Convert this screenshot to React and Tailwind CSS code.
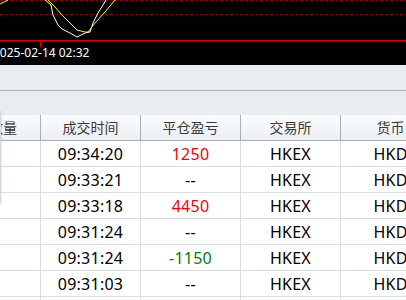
import React from "react";

const rows = [
  { t: "09:34:20", p: "1250", c: "text-[#ff0000]" },
  { t: "09:33:21", p: "--", c: "text-black" },
  { t: "09:33:18", p: "4450", c: "text-[#ff0000]" },
  { t: "09:31:24", p: "--", c: "text-black" },
  { t: "09:31:24", p: "-1150", c: "text-[#008000]" },
  { t: "09:31:03", p: "--", c: "text-black" },
  { t: "", p: "", c: "text-black" },
];

const headers = ["成交时间", "平仓盈亏", "交易所", "货币"];

function Chart() {
  return (
    <svg className="absolute inset-0" width="406" height="65" viewBox="0 0 406 65">
      <line x1="0" y1="0.5" x2="406" y2="0.5" stroke="#8a0000" strokeDasharray="3 2" />
      <line x1="0" y1="14.5" x2="406" y2="14.5" stroke="#8a0000" strokeDasharray="3 2" />
      <line x1="0" y1="40.5" x2="406" y2="40.5" stroke="#e00000" strokeWidth="1" />
      <line x1="40.5" y1="40" x2="40.5" y2="47" stroke="#e00000" />
      <polyline
        fill="none"
        stroke="#ffffff"
        strokeWidth="1"
        points="45,0 51,5 53,15 58,25 62,29 70,33 77,37 85,33 90,32 93,23 98,13 103,5 106,0"
      />
      <polyline
        fill="none"
        stroke="#ffff00"
        strokeWidth="1"
        points="48,0 55,7 62,15 70,23 77,30 85,32 88,32 95,23 105,12 115,0"
      />
      <polyline fill="none" stroke="#ffff00" strokeWidth="1" points="0,4 4,2 8,0" />
    </svg>
  );
}

export default function App() {
  return (
    <div
      className="relative w-[406px] h-[300px] overflow-hidden bg-white"
      style={{ fontFamily: '"Noto Sans", "Noto Sans CJK SC", sans-serif' }}
    >
      <div className="relative h-[65px] bg-black flex flex-col">
        <Chart />
        <div className="relative mt-[46px] ml-[-7px] text-[12px] leading-[14px] text-white whitespace-nowrap">
          2025-02-14 02:32
        </div>
      </div>
      <div className="h-[26px] bg-[#e9ecf1] border-b border-[#a9aeb6]" />
      <div className="h-[24px] bg-[#e9ecf1]" />
      <div className="ml-[-59px] w-[500px]">
        <div className="grid grid-cols-[100px_100px_100px_100px_100px] h-[26px] border-b border-[#a9afb8] bg-gradient-to-b from-[#fbfcfd] to-[#eceff3] text-[14px] text-[#3a3a3a]">
          <div className="flex items-center justify-end pr-[23px] border-r border-[#a9afb8]">
            数量
          </div>
          {headers.map((h, i) => (
            <div
              key={i}
              className="flex items-center justify-center border-r border-[#a9afb8]"
            >
              {h}
            </div>
          ))}
        </div>
        {rows.map((r, i) => (
          <div
            key={i}
            className="grid grid-cols-[100px_100px_100px_100px_100px] h-[26px] border-b border-[#dadde2] text-[16px] tracking-[0.25px]"
          >
            <div className="border-r border-[#dadde2]" />
            <div className="flex items-center justify-center border-r border-[#dadde2] text-black">
              {r.t}
            </div>
            <div className={`flex items-center justify-center border-r border-[#dadde2] ${r.c}`}>
              {r.p}
            </div>
            <div className="flex items-center justify-center border-r border-[#dadde2] text-black">
              {r.t ? "HKEX" : ""}
            </div>
            <div className="flex items-center justify-center border-r border-[#dadde2] text-black">
              {r.t ? "HKD" : ""}
            </div>
          </div>
        ))}
      </div>
      <div className="absolute left-[-10px] top-[111px] w-[11px] h-[94px] rounded-br-[4px] border-r border-b border-[#d4d7dc] shadow-[1px_1px_2px_rgba(0,0,0,0.08)]" />
    </div>
  );
}
